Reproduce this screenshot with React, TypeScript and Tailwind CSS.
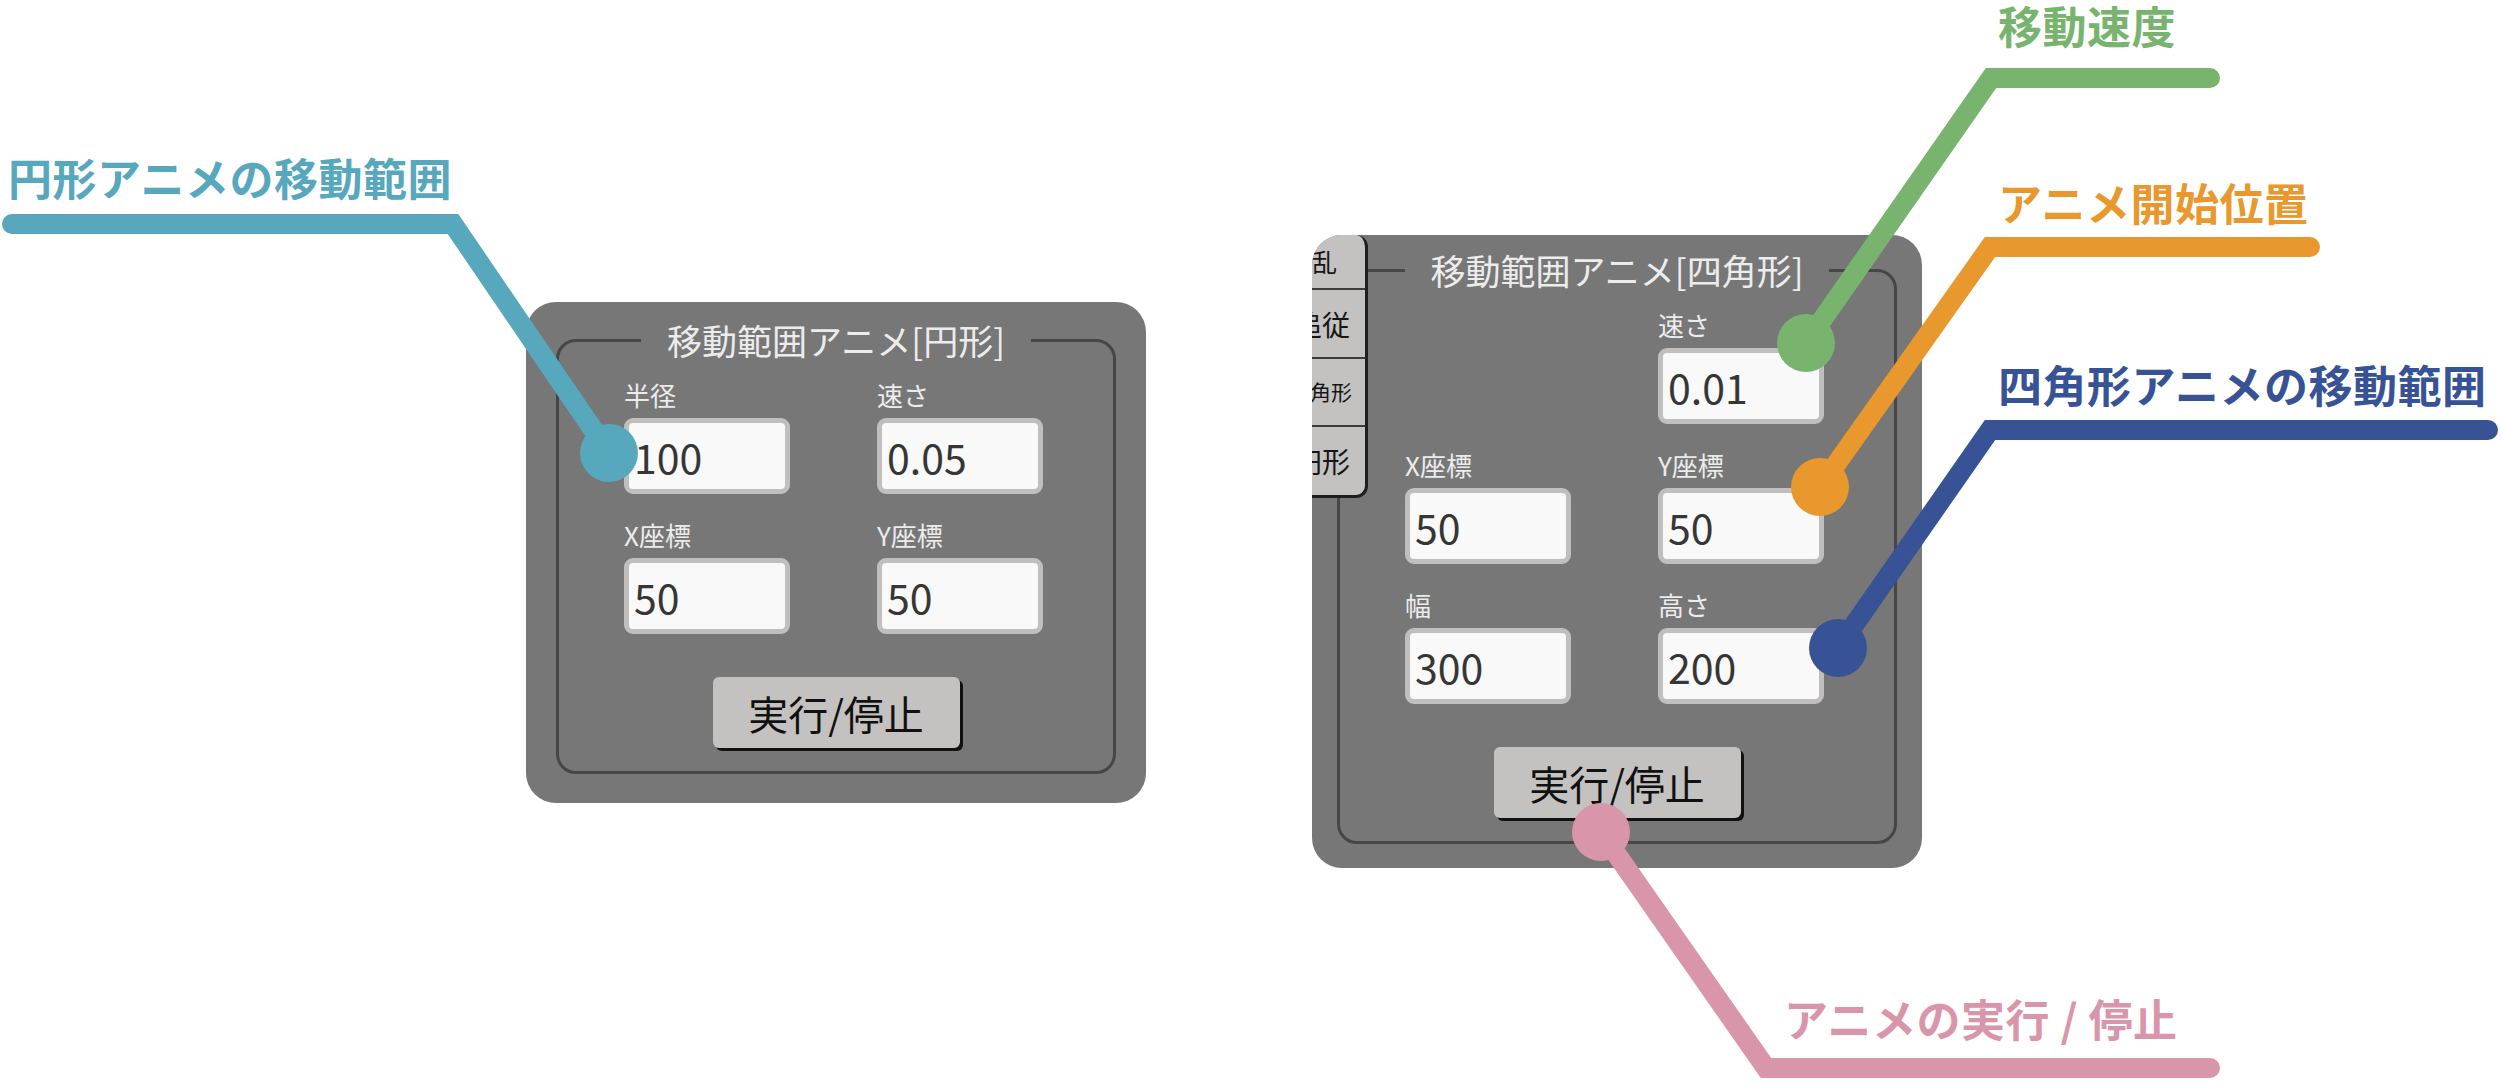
import React from "react";

// callout colours
const TEAL = "#57a7bd";
const GREEN = "#79b46f";
const ORANGE = "#e9982d";
const NAVY = "#375396";
const PINK = "#d995a9";

function Field({ label, value }: { label: string; value: string }) {
  return (
    <div className="flex flex-col">
      <span className="text-[26px] leading-[26px] text-[#ececec]">{label}</span>
      <input
        readOnly
        value={value}
        className="mt-[10px] h-[76px] w-[166px] rounded-[9px] border-[5px] border-[#c0bfbd] bg-[#f9f9f9] pl-[5px] font-['Noto_Sans_CJK_JP',sans-serif] text-[41px] text-[#363636] outline-none"
      />
    </div>
  );
}

function RunButton() {
  return (
    <div className="mt-[43px] flex justify-center">
      <button className="h-[71px] w-[247px] rounded-[6px] bg-[#c3c2c0] text-[40px] leading-none text-[#111] shadow-[3px_3px_0_#111]">
        実行/停止
      </button>
    </div>
  );
}

function Panel({ title, children }: { title: string; children: React.ReactNode }) {
  return (
    <fieldset className="w-[560px] rounded-[20px] border-[3px] border-[#464646] pt-[22px] pb-[23px]">
      <legend className="mx-auto whitespace-nowrap px-[26px] text-[35px] leading-[40px] text-[#ececec]">{title}</legend>
      <div className="px-[65px]">{children}</div>
    </fieldset>
  );
}

const tabs = [
  { text: "散乱", h: "h-[55px]", pr: "pr-[28px]", size: "text-[25px]" },
  { text: "追従", h: "h-[69px]", pr: "pr-[15px]", size: "text-[28px]" },
  { text: "四角形", h: "h-[68px]", pr: "pr-[13px]", size: "text-[21px]" },
  { text: "円形", h: "h-[68px]", pr: "pr-[15px]", size: "text-[28px]" },
];

function Callouts() {
  return (
    <>
      <svg className="pointer-events-none absolute left-0 top-0" width={2501} height={1082}>
        <g fill="none" strokeWidth={20} strokeLinecap="round" strokeLinejoin="miter">
          <polyline points="12,224 453,224 609,453" stroke={TEAL} />
          <polyline points="2210,78 1991,78 1806,343" stroke={GREEN} />
          <polyline points="2310,247 1990,247 1820,487" stroke={ORANGE} />
          <polyline points="2488,430 1990,430 1838,648" stroke={NAVY} />
          <polyline points="1601,832 1766,1068 2210,1068" stroke={PINK} />
        </g>
        <circle cx={609} cy={453} r={29} fill={TEAL} />
        <circle cx={1806} cy={343} r={29} fill={GREEN} />
        <circle cx={1820} cy={487} r={29} fill={ORANGE} />
        <circle cx={1838} cy={648} r={29} fill={NAVY} />
        <circle cx={1601} cy={832} r={29} fill={PINK} />
      </svg>
      <div className="absolute left-[8px] top-[155px] text-[44px] font-bold leading-[44px] tracking-[0.5px] text-[#57a7bd]">
        円形アニメの移動範囲
      </div>
      <div className="absolute left-[1998px] top-[3px] text-[44px] font-bold leading-[44px] tracking-[0.5px] text-[#79b46f]">
        移動速度
      </div>
      <div className="absolute left-[1998px] top-[180px] text-[44px] font-bold leading-[44px] tracking-[0.5px] text-[#e9982d]">
        アニメ開始位置
      </div>
      <div className="absolute left-[1998px] top-[362px] text-[44px] font-bold leading-[44px] tracking-[0.5px] text-[#375396]">
        四角形アニメの移動範囲
      </div>
      <div className="absolute left-[1784px] top-[996px] text-[44px] font-bold leading-[44px] tracking-[0.5px] text-[#d995a9]">
        アニメの実行 / 停止
      </div>
    </>
  );
}

export default function App() {
  return (
    <div className="relative h-[1082px] w-[2501px] overflow-hidden bg-white font-['Noto_Sans_CJK_JP',sans-serif]">
      <div className="flex items-start">
        {/* circle range panel */}
        <div className="ml-[526px] mt-[302px] w-[620px] rounded-[30px] bg-[#777777] px-[30px] pt-[18px] pb-[29px]">
          <Panel title="移動範囲アニメ[円形]">
            <div className="grid grid-cols-[166px_166px] gap-x-[87px] gap-y-[28px]">
              <Field label="半径" value="100" />
              <Field label="速さ" value="0.05" />
              <Field label="X座標" value="50" />
              <Field label="Y座標" value="50" />
            </div>
            <RunButton />
          </Panel>
        </div>

        {/* rect range panel with side tabs */}
        <div className="relative ml-[166px] mt-[235px] w-[610px] overflow-hidden rounded-[30px] bg-[#777777] px-[25px] pt-[15px] pb-[24px]">
          <Panel title="移動範囲アニメ[四角形]">
            <div className="grid grid-cols-[166px_166px] gap-x-[87px] gap-y-[28px]">
              <div />
              <Field label="速さ" value="0.01" />
              <Field label="X座標" value="50" />
              <Field label="Y座標" value="50" />
              <Field label="幅" value="300" />
              <Field label="高さ" value="200" />
            </div>
            <RunButton />
          </Panel>
          <div className="absolute left-0 top-0 flex w-[56px] flex-col overflow-hidden rounded-r-[12px] border-r-[3px] border-b-[3px] border-[#1e1e1e] bg-[#c3c2c0]">
            {tabs.map((t, i) => (
              <div
                key={t.text}
                className={`flex items-center justify-end whitespace-nowrap text-[#151515] ${t.h} ${t.pr} ${t.size} ${
                  i < tabs.length - 1 ? "border-b-2 border-[#3c3c3c]" : ""
                }`}
              >
                {t.text}
              </div>
            ))}
          </div>
        </div>
      </div>
      <Callouts />
    </div>
  );
}
